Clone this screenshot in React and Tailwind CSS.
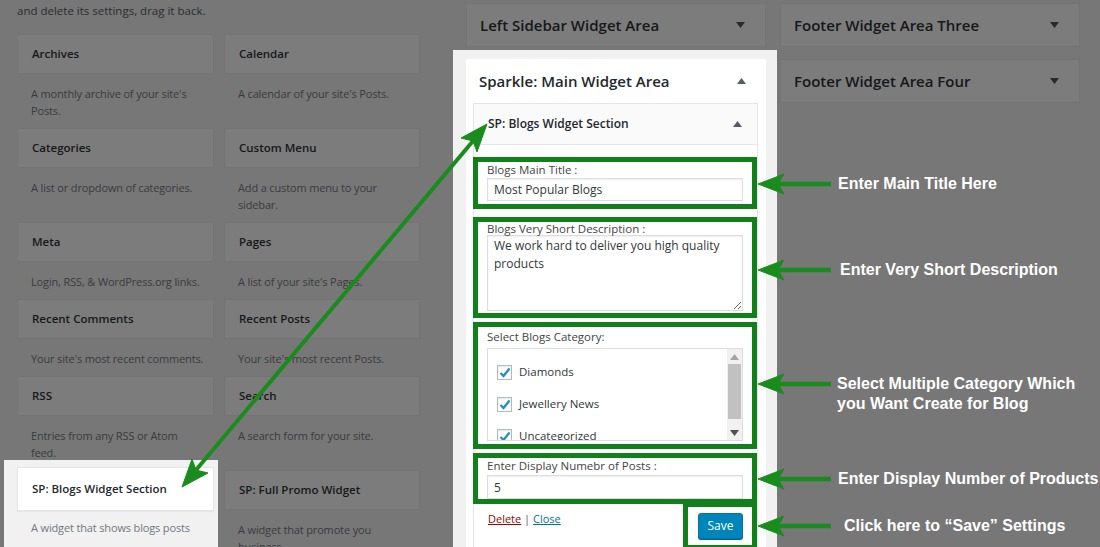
const rows = [
  [
    { title: "Archives", desc: ["A monthly archive of your site's", "Posts."] },
    { title: "Calendar", desc: ["A calendar of your site's Posts."] },
  ],
  [
    { title: "Categories", desc: ["A list or dropdown of categories."] },
    { title: "Custom Menu", desc: ["Add a custom menu to your", "sidebar."] },
  ],
  [
    { title: "Meta", desc: ["Login, RSS, & WordPress.org links."] },
    { title: "Pages", desc: ["A list of your site's Pages."] },
  ],
  [
    { title: "Recent Comments", desc: ["Your site's most recent comments."] },
    { title: "Recent Posts", desc: ["Your site's most recent Posts."] },
  ],
  [
    { title: "RSS", desc: ["Entries from any RSS or Atom", "feed."] },
    { title: "Search", desc: ["A search form for your site."] },
  ],
  [
    { title: "SP: Blogs Widget Section", desc: ["A widget that shows blogs posts"], active: true },
    { title: "SP: Full Promo Widget", desc: ["A widget that promote you", "business."] },
  ],
];

const notes = [
  { y: 184, lines: ["Enter Main Title Here"], x: 838 },
  { y: 270, lines: ["Enter Very Short Description"], x: 840 },
  { y: 384, lines: ["Select Multiple Category Which", "you Want Create for Blog"], x: 837 },
  { y: 479, lines: ["Enter Display Number of Products"], x: 838 },
  { y: 526, lines: ["Click here to \u201cSave\u201d Settings"], x: 844 },
];

function Caret({ up, color = "#2a2a2a" }) {
  return (
    <svg width="9" height="6" viewBox="0 0 9 6">
      <polygon points={up ? "0,6 9,6 4.5,0" : "0,0 9,0 4.5,6"} fill={color} />
    </svg>
  );
}

function Check() {
  return (
    <span className="flex h-[15px] w-[15px] items-center justify-center border border-[#b4b9be] bg-white shadow-[inset_0_1px_2px_rgba(0,0,0,0.1)]">
      <svg width="12" height="11" viewBox="0 0 12 11">
        <path d="M1.5 6 L4.5 9 L10.5 1.5" fill="none" stroke="#1e8cbe" strokeWidth="2.2" />
      </svg>
    </span>
  );
}

function WidgetItem({ item }) {
  if (item.active) {
    return (
      <div className="-ml-[13px] -mr-[4px] -mt-[10px] bg-[#f1f1f1] pl-[13px] pr-[4px] pt-[7px] pb-[20px]">
        <div className="h-[44px] border border-[#e5e5e5] bg-white pl-[14px] text-[11.5px] font-semibold leading-[42px] text-[#23282d] shadow-[0_1px_1px_rgba(0,0,0,0.04)]">
          {item.title}
        </div>
        <div className="pl-[14px] pt-[8px] text-[11px] leading-[17px] tracking-[-0.15px] text-[#72777c]">
          {item.desc.map((l) => (
            <div key={l} className="whitespace-nowrap">{l}</div>
          ))}
        </div>
      </div>
    );
  }
  return (
    <div>
      <div className="h-[40px] border border-[#747474] bg-[#7c7c7c] pl-[14px] text-[11.5px] font-semibold leading-[38px] text-[#161819]">
        {item.title}
      </div>
      <div className="pl-[14px] pt-[11px] pb-[9px] text-[11px] leading-[17px] tracking-[-0.15px] text-[#3a3b3d]">
        {item.desc.map((l) => (
          <div key={l} className="whitespace-nowrap">{l}</div>
        ))}
      </div>
    </div>
  );
}

function DimArea({ title }) {
  return (
    <div className="flex h-[44px] items-center justify-between border border-[#747474] bg-[#7c7c7c] pl-[13px] pr-[20px]">
      <span className="text-[15px] font-semibold text-[#161819]">{title}</span>
      <Caret />
    </div>
  );
}

function Box({ className = "", children }) {
  return <div className={"-ml-px border-[5px] border-[#11801b] px-[9px] " + className}>{children}</div>;
}

const field =
  "block w-full border border-[#dddddd] bg-white px-[6px] text-[12px] text-[#32373c] shadow-[inset_0_1px_2px_rgba(0,0,0,0.07)] outline-none";

export default function App() {
  return (
    <div className="relative flex h-[547px] w-[1100px] overflow-hidden bg-[#777777] font-['Open_Sans',sans-serif]">
      {/* available widgets */}
      <div className="w-[453px] pl-[17px] pt-[2px]">
        <p className="text-[11.5px] leading-[17px] text-[#2b2c2e]">and delete its settings, drag it back.</p>
        <div className="mt-[15px] grid grid-cols-[197px_196px] gap-x-[10px]">
          {rows.map((r) => r.map((item) => <WidgetItem key={item.title} item={item} />))}
        </div>
      </div>

      {/* sidebar areas */}
      <div className="flex w-[324px] flex-col">
        <div className="pl-[13px] pr-[11px] pt-[3px]">
          <DimArea title="Left Sidebar Widget Area" />
        </div>
        <div className="mt-[3px] flex-1 bg-[#f1f1f1] pl-[13px] pr-[11px] pt-[9px]">
          <div className="h-full bg-white pl-[7px] pr-[8px]">
            <div className="flex h-[44px] items-center justify-between pl-[6px] pr-[12px]">
              <span className="text-[15px] font-semibold text-[#23282d]">Sparkle: Main Widget Area</span>
              <Caret up color="#555d66" />
            </div>
            <div className="border border-[#e5e5e5]">
              <div className="flex h-[41px] items-center justify-between border-b border-[#e5e5e5] bg-[#fafafa] pl-[14px] pr-[15px]">
                <span className="text-[12px] font-semibold text-[#23282d]">SP: Blogs Widget Section</span>
                <Caret up color="#555d66" />
              </div>
              <div className="pt-[12px] text-[11.5px] text-[#444444]">
                <Box className="pb-[3px]">
                  <div className="leading-[16px]">Blogs Main Title :</div>
                  <input readOnly value="Most Popular Blogs" className={field + " h-[23px]"} />
                </Box>
                <Box className="mt-[8px] pb-[2px]">
                  <div className="leading-[13px]">Blogs Very Short Description :</div>
                  <textarea
                    readOnly
                    defaultValue="We work hard to deliver you high quality products"
                    className={field + " h-[76px] py-px leading-[18px]"}
                  />
                </Box>
                <Box className="mt-[4px] pb-[3px]">
                  <div className="pt-[2px] leading-[16px]">Select Blogs Category:</div>
                  <div className="mt-[3px] flex h-[93px] overflow-hidden border border-[#dddddd] bg-white">
                    <div className="flex-1 pl-[9px] pt-[7px] text-[11.5px] text-[#32373c]">
                      {["Diamonds", "Jewellery News", "Uncategorized"].map((c) => (
                        <div key={c} className="flex h-[32px] items-center gap-[7px]">
                          <Check />
                          <span>{c}</span>
                        </div>
                      ))}
                    </div>
                    <div className="flex w-[15px] flex-col items-center bg-[#f1f1f1]">
                      <div className="flex h-[15px] items-center">
                        <Caret up color="#a3a3a3" />
                      </div>
                      <div className="h-[55px] w-[13px] bg-[#c1c1c1]" />
                      <div className="flex flex-1 items-end pb-[4px]">
                        <Caret color="#505050" />
                      </div>
                    </div>
                  </div>
                </Box>
                <Box className="mt-[4px]">
                  <div className="leading-[16px]">Enter Display Numebr of Posts :</div>
                  <input readOnly value="5" className={field + " mt-px h-[24px]"} />
                </Box>
                <div className="-mt-[2px] flex items-start justify-between">
                  <div className="pl-[14px] pt-[9px] text-[11px]">
                    <span className="text-[#a00000] underline">Delete</span>
                    <span className="text-[#555d66]"> | </span>
                    <span className="text-[#0073aa] underline">Close</span>
                  </div>
                  <div className="h-[48px] border-[5px] border-[#11801b] pl-[10px] pr-[9px] pt-[6px]">
                    <div className="flex h-[26px] w-[45px] items-center justify-center rounded-[3px] border border-[#0073aa] bg-[#0085ba] text-[12px] text-white shadow-[0_1px_0_#006799]">
                      Save
                    </div>
                  </div>
                </div>
              </div>
            </div>
          </div>
        </div>
      </div>

      {/* footer areas */}
      <div className="ml-[3px] flex w-[300px] flex-col gap-[12px] pt-[3px]">
        <DimArea title="Footer Widget Area Three" />
        <DimArea title="Footer Widget Area Four" />
      </div>

      {/* annotations */}
      <svg className="pointer-events-none absolute inset-0" width="1100" height="547" viewBox="0 0 1100 547">
        <g fill="#1a8c1e" stroke="#1a8c1e">
          <line x1="196" y1="470" x2="473" y2="141" strokeWidth="4" />
          <polygon points="487,124 477,152 473,141 461,138" strokeWidth="1" />
          <polygon points="182,487 192,459 196,470 208,473" strokeWidth="1" />
          {notes.map((n) => (
            <g key={n.y}>
              <line x1="776" y1={n.y} x2="831" y2={n.y} strokeWidth="4.5" />
              <polygon points={`758,${n.y} 784,${n.y - 10} 778,${n.y} 784,${n.y + 10}`} strokeWidth="1" />
            </g>
          ))}
        </g>
      </svg>
      {notes.map((n) => (
        <div
          key={n.y}
          className="absolute font-['Liberation_Sans',Arial,sans-serif] text-[16px] font-bold leading-[20px] text-white"
          style={{ left: n.x, top: n.y - 10 }}
        >
          {n.lines.map((l) => (
            <div key={l} className="whitespace-nowrap">{l}</div>
          ))}
        </div>
      ))}
    </div>
  );
}
